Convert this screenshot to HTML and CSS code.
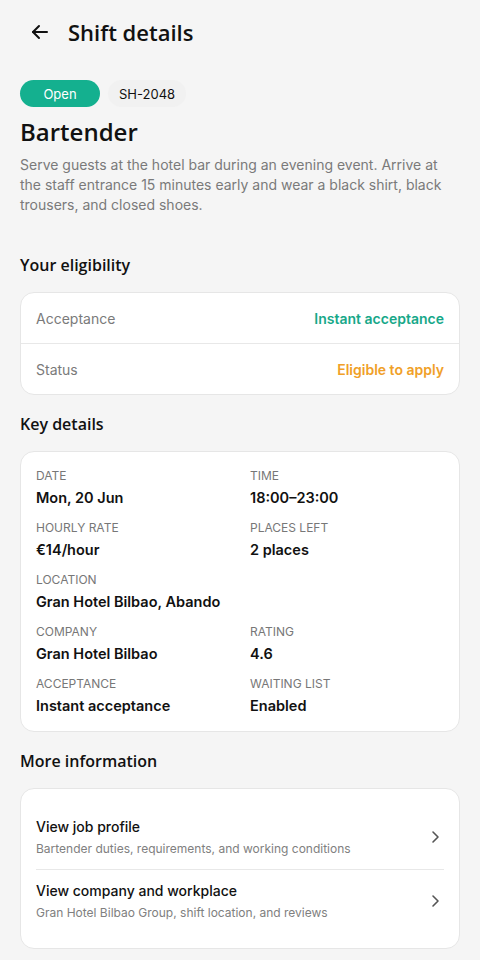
FILE: index.html
```html
<!DOCTYPE html>
<html lang="en">
<head>
    <meta charset="UTF-8">
    <meta name="viewport" content="width=device-width, initial-scale=1.0">
    <title>Shift details</title>
    <link rel="stylesheet" href="styles.css">
</head>
<body>

    <header class="topbar">
        <button class="back" aria-label="Back">
            <svg width="18" height="18" viewBox="0 0 18 18" fill="none" stroke="#111" stroke-width="2" stroke-linecap="round" stroke-linejoin="round">
                <path d="M16 9H2"/>
                <path d="M8 3L2 9l6 6"/>
            </svg>
        </button>
        <h1>Shift details</h1>
    </header>

    <main class="page">
        <div class="chips">
            <span class="chip chip-open">Open</span>
            <span class="chip chip-id">SH-2048</span>
        </div>
        <h2 class="job-title">Bartender</h2>
        <p class="description">Serve guests at the hotel bar during an evening event. Arrive at the staff entrance 15 minutes early and wear a black shirt, black trousers, and closed shoes.</p>

        <h3 class="section-title">Your eligibility</h3>
        <div class="card">
            <div class="row">
                <span class="row-label">Acceptance</span>
                <span class="row-value green">Instant acceptance</span>
            </div>
            <div class="row">
                <span class="row-label">Status</span>
                <span class="row-value orange">Eligible to apply</span>
            </div>
        </div>

        <h3 class="section-title">Key details</h3>
        <div class="card details">
            <div class="item">
                <div class="item-label">Date</div>
                <div class="item-value">Mon, 20 Jun</div>
            </div>
            <div class="item">
                <div class="item-label">Time</div>
                <div class="item-value">18:00–23:00</div>
            </div>
            <div class="item">
                <div class="item-label">Hourly rate</div>
                <div class="item-value">€14/hour</div>
            </div>
            <div class="item">
                <div class="item-label">Places left</div>
                <div class="item-value">2 places</div>
            </div>
            <div class="item wide">
                <div class="item-label">Location</div>
                <div class="item-value">Gran Hotel Bilbao, Abando</div>
            </div>
            <div class="item">
                <div class="item-label">Company</div>
                <div class="item-value">Gran Hotel Bilbao</div>
            </div>
            <div class="item">
                <div class="item-label">Rating</div>
                <div class="item-value">4.6</div>
            </div>
            <div class="item">
                <div class="item-label">Acceptance</div>
                <div class="item-value">Instant acceptance</div>
            </div>
            <div class="item">
                <div class="item-label">Waiting list</div>
                <div class="item-value">Enabled</div>
            </div>
        </div>

        <h3 class="section-title">More information</h3>
        <div class="card links">
            <a class="link" href="#">
                <div>
                    <div class="link-title">View job profile</div>
                    <div class="link-sub">Bartender duties, requirements, and working conditions</div>
                </div>
                <svg width="10" height="14" viewBox="0 0 10 14" fill="none" stroke="#555" stroke-width="1.6" stroke-linecap="round" stroke-linejoin="round"><path d="M3 2l5 5-5 5"/></svg>
            </a>
            <a class="link" href="#">
                <div>
                    <div class="link-title">View company and workplace</div>
                    <div class="link-sub">Gran Hotel Bilbao Group, shift location, and reviews</div>
                </div>
                <svg width="10" height="14" viewBox="0 0 10 14" fill="none" stroke="#555" stroke-width="1.6" stroke-linecap="round" stroke-linejoin="round"><path d="M3 2l5 5-5 5"/></svg>
            </a>
        </div>
    </main>

</body>
</html>
```

FILE: styles.css
```css
body {
    margin: 0;
    background-color: #f5f5f5;
    font-family: Inter, "Noto Sans", sans-serif;
    color: #111;
}

.topbar {
    display: flex;
    align-items: center;
    height: 64px;
    padding: 0 20px 0 28px;
    gap: 16px;
}

.back {
    width: 24px;
    height: 24px;
    padding: 0;
    border: none;
    background: none;
    display: flex;
    align-items: center;
    justify-content: center;
}

.topbar h1 {
    margin: 0;
    font-family: "Open Sans", sans-serif;
    font-size: 22px;
    font-weight: 600;
    line-height: 30px;
}

.page {
    padding: 16px 20px 20px;
}

.chips {
    display: flex;
    gap: 8px;
}

.chip {
    display: inline-flex;
    align-items: center;
    height: 27px;
    padding: 0 11px;
    border-radius: 14px;
    font-size: 13px;
}

.chip-open {
    width: 80px;
    justify-content: center;
    padding: 0;
    background-color: #14b08f;
    color: #fff;
}

.chip-id {
    background-color: #f1f1f1;
    color: #111;
}

.job-title {
    margin: 9px 0 7px;
    font-family: "Open Sans", sans-serif;
    font-size: 24px;
    font-weight: 600;
    line-height: 32px;
}

.description {
    margin: 0 0 38px;
    font-size: 14px;
    line-height: 20px;
    color: #7a7a7a;
}

.section-title {
    margin: 0 0 15px;
    font-family: "Open Sans", sans-serif;
    font-size: 16px;
    font-weight: 600;
    line-height: 24px;
}

.card {
    background-color: #fff;
    border: 1px solid #e6e6e6;
    border-radius: 14px;
    margin-bottom: 17px;
}

.row {
    display: flex;
    justify-content: space-between;
    align-items: center;
    height: 50px;
    padding: 0 15px;
    font-size: 14px;
}

.row + .row {
    border-top: 1px solid #e8e8e8;
}

.row-label {
    color: #7a7a7a;
}

.row-value {
    font-weight: 600;
}

.green {
    color: #17a889;
}

.orange {
    color: #f0a028;
}

.details {
    display: grid;
    grid-template-columns: 1fr 1fr;
    row-gap: 12px;
    column-gap: 20px;
    padding: 16px 15px 15px;
}

.item.wide {
    grid-column: 1 / 3;
}

.item-label {
    font-size: 12px;
    line-height: 16px;
    text-transform: uppercase;
    color: #777;
    margin-bottom: 4px;
}

.item-value {
    font-size: 14.5px;
    line-height: 20px;
    font-weight: 600;
}

.links {
    padding: 17px 15px 15px;
}

.link {
    display: flex;
    justify-content: space-between;
    align-items: center;
    padding: 11px 0 12px;
    text-decoration: none;
    color: inherit;
}

.link + .link {
    border-top: 1px solid #e8e8e8;
}

.link svg {
    margin-right: 4px;
}

.link-title {
    font-size: 14px;
    font-weight: 500;
    line-height: 20px;
    margin-bottom: 4px;
}

.link-sub {
    font-size: 12px;
    line-height: 16px;
    color: #808080;
}
```
